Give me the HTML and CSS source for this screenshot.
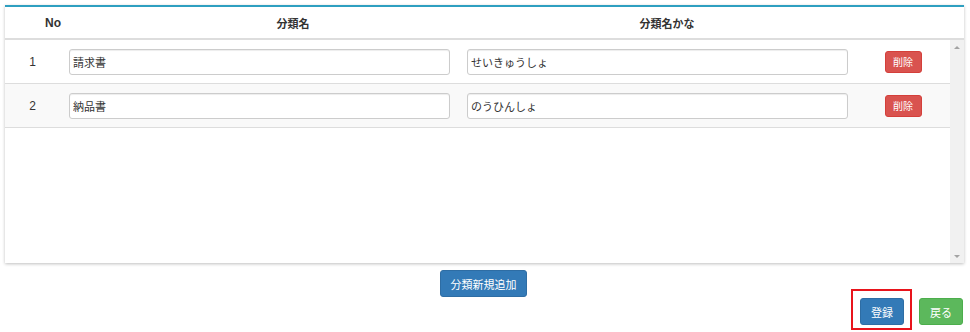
FILE: index.html
```html
<!DOCTYPE html>
<html lang="ja">
  <head>
    <meta charset="UTF-8" />
    <title>分類マスタ</title>
    <link rel="stylesheet" href="styles.css">
  </head>
  <body>
    <div class="panel">
      <div class="grid-head">
        <div class="th th-no">No</div>
        <div class="th th-name">分類名</div>
        <div class="th th-kana">分類名かな</div>
        <div class="th th-del"></div>
      </div>
      <div class="grid-body">
        <div class="rows">
          <div class="row">
            <div class="td td-no">1</div>
            <div class="td td-name"><input class="form-input" type="text" value="請求書"></div>
            <div class="td td-kana"><input class="form-input" type="text" value="せいきゅうしょ"></div>
            <div class="td td-del"><button class="btn btn-danger">削除</button></div>
          </div>
          <div class="row row-odd">
            <div class="td td-no">2</div>
            <div class="td td-name"><input class="form-input" type="text" value="納品書"></div>
            <div class="td td-kana"><input class="form-input" type="text" value="のうひんしょ"></div>
            <div class="td td-del"><button class="btn btn-danger">削除</button></div>
          </div>
        </div>
        <!-- scrollbar rail (content does not overflow, so no thumb) -->
        <div class="scroll-rail">
          <span class="arrow arrow-up"></span>
          <span class="arrow arrow-down"></span>
        </div>
      </div>
    </div>

    <div class="add-area">
      <button class="btn btn-primary btn-add">分類新規追加</button>
    </div>

    <div class="actions">
      <div class="focus-box">
        <button class="btn btn-primary btn-action">登録</button>
      </div>
      <button class="btn btn-success btn-action btn-back">戻る</button>
    </div>
  </body>
</html>
```

FILE: styles.css
```css
body {
  margin: 0;
  font-family: "Liberation Sans", "Noto Sans CJK JP", sans-serif;
  font-size: 12px;
  color: #333;
  background-color: #fff;
}

.panel {
  margin: 5px 6px 0 5px;
  border-top: 2px solid #2e9fc0;
  background-color: #fff;
  box-shadow: 0 1px 3px rgba(0, 0, 0, 0.25);
}

/* header */
.grid-head {
  display: grid;
  grid-template-columns: 96px 384px 364px 1fr;
  height: 31px;
  border-bottom: 2px solid #ddd;
}

.th {
  display: flex;
  align-items: center;
  justify-content: center;
  font-weight: bold;
  font-size: 11px;
}

.th-no {
  font-size: 12px;
}

/* body rows */
.grid-body {
  display: flex;
  height: 223px;
}

.rows {
  flex: 1;
}

.scroll-rail {
  width: 14px;
  background-color: #f1f1f1;
  display: flex;
  flex-direction: column;
  justify-content: space-between;
  align-items: center;
  padding: 6px 0 5px;
  box-sizing: border-box;
}

.arrow {
  width: 0;
  height: 0;
  border-left: 3px solid transparent;
  border-right: 3px solid transparent;
}

.arrow-up {
  border-bottom: 3px solid #a3a3a3;
}

.arrow-down {
  border-top: 3px solid #a3a3a3;
}

.row {
  display: grid;
  grid-template-columns: 55px 398px 398px 1fr;
  height: 43px;
  border-bottom: 1px solid #ddd;
}

.row-odd {
  background-color: #f9f9f9;
}

.td {
  display: flex;
  align-items: center;
}

.td-no {
  justify-content: center;
}

.td-name,
.td-kana {
  padding: 0 8px 0 9px;
}

.td-del {
  justify-content: center;
}

.form-input {
  width: 100%;
  height: 26px;
  box-sizing: border-box;
  padding: 0 3px;
  border: 1px solid #ccc;
  border-radius: 3px;
  font-family: "Noto Sans CJK JP", sans-serif;
  font-size: 11px;
  color: #333;
  background-color: #fff;
  box-shadow: inset 0 1px 1px rgba(0, 0, 0, 0.075);
}

/* buttons */
.btn {
  border: 1px solid transparent;
  border-radius: 3px;
  color: #fff;
  font-family: "Noto Sans CJK JP", sans-serif;
  cursor: pointer;
  padding: 0;
}

.btn-danger {
  width: 37px;
  height: 22px;
  font-size: 10px;
  background-color: #d9534f;
  border-color: #d43f3a;
}

.btn-primary {
  background-color: #337ab7;
  border-color: #2e6da4;
}

.btn-success {
  background-color: #5cb85c;
  border-color: #4cae4c;
}

.add-area {
  display: flex;
  justify-content: center;
  margin-top: 7px;
  padding-right: 3px;
}

.btn-add {
  width: 87px;
  height: 27px;
  font-size: 11px;
}

.actions {
  display: flex;
  justify-content: flex-end;
  align-items: flex-start;
  margin-top: -8px;
  padding-right: 7px;
}

.focus-box {
  padding: 7px 6px 3px 7px;
  border: 2px solid #e8141c;
}

.btn-action {
  width: 44px;
  height: 27px;
  font-size: 11px;
}

.btn-back {
  margin: 9px 0 0 7px;
}
```
